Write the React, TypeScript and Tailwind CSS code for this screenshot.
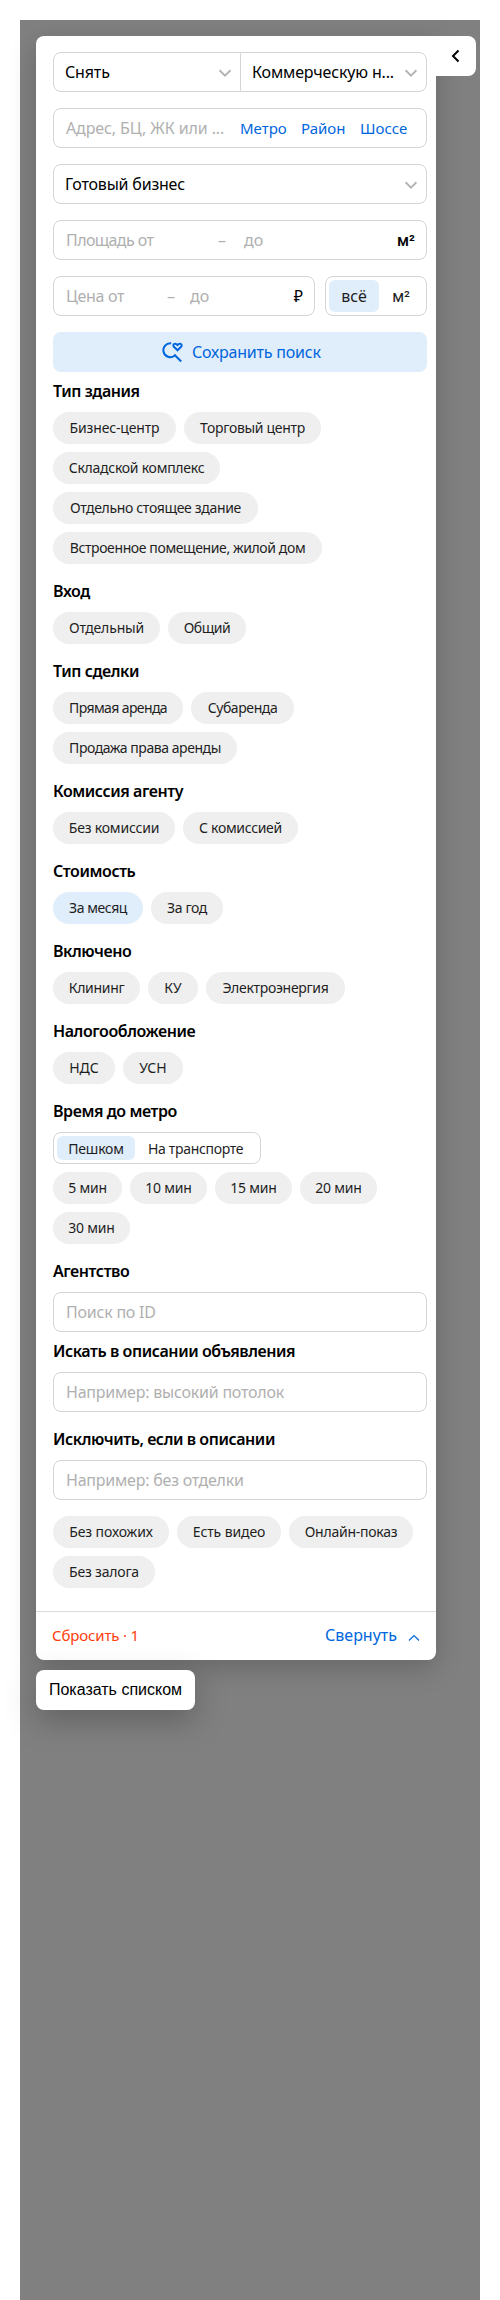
import React from 'react';

type ChipItem = { label: string; size: string; active?: boolean };

function Chip({ label, size, active }: ChipItem) {
  return (
    <button
      className={`flex h-8 shrink-0 items-center justify-center rounded-full text-[14px] leading-4 whitespace-nowrap text-[#1f1f1f] ${size} ${active ? 'bg-[#e0edfb]' : 'bg-[#efefef]'}`}
    >
      {label}
    </button>
  );
}

function Chips({ items }: { items: ChipItem[] }) {
  return (
    <div className="flex flex-wrap gap-2">
      {items.map((item) => (
        <Chip key={item.label} {...item} />
      ))}
    </div>
  );
}

function Heading({ title }: { title: string }) {
  return (
    <h3 className="flex h-10 items-center pb-[2px] text-[16px] font-semibold tracking-[-0.43px] whitespace-nowrap text-black">
      {title}
    </h3>
  );
}

function Section({ title, items }: { title: string; items: ChipItem[] }) {
  return (
    <section className="mb-2">
      <Heading title={title} />
      <Chips items={items} />
    </section>
  );
}

function Chevron() {
  return (
    <svg className="mt-px h-3 w-3 shrink-0" viewBox="0 0 12 12" fill="none" stroke="#b3b3b3" strokeWidth="2">
      <path d="M.5 3.200 6 8.700l5.500-5.500" />
    </svg>
  );
}

function SearchField({ placeholder }: { placeholder: string }) {
  return (
    <div className="flex h-10 items-center rounded-lg border border-[#d5d5d5] pl-3 text-[16px] tracking-[-0.22px] text-[#b0b0b0]">
      {placeholder}
    </div>
  );
}

const building: ChipItem[] = [
  { label: 'Бизнес-центр', size: 'w-[123px] tracking-[-0.15px]' },
  { label: 'Торговый центр', size: 'w-[137px] tracking-[-0.3px]' },
  { label: 'Складской комплекс', size: 'w-[167px] tracking-[-0.26px]' },
  { label: 'Отдельно стоящее здание', size: 'w-[205px] tracking-[-0.33px]' },
  { label: 'Встроенное помещение, жилой дом', size: 'w-[269px] tracking-[-0.39px]' },
];
const entrance: ChipItem[] = [
  { label: 'Отдельный', size: 'w-[107px] tracking-[-0.15px]' },
  { label: 'Общий', size: 'w-[78px] tracking-[-0.45px]' },
];
const deal: ChipItem[] = [
  { label: 'Прямая аренда', size: 'w-[130px] tracking-[-0.6px]' },
  { label: 'Субаренда', size: 'w-[103px] tracking-[-0.4px]' },
  { label: 'Продажа права аренды', size: 'w-[184px] tracking-[-0.44px]' },
];
const commission: ChipItem[] = [
  { label: 'Без комиссии', size: 'w-[122px] tracking-[-0.2px]' },
  { label: 'С комиссией', size: 'w-[115px] tracking-[-0.32px]' },
];
const cost: ChipItem[] = [
  { label: 'За месяц', size: 'w-[90px] tracking-[-0.45px]', active: true },
  { label: 'За год', size: 'w-[72px] tracking-[-0.4px]' },
];
const included: ChipItem[] = [
  { label: 'Клининг', size: 'w-[87px] tracking-[-0.3px]' },
  { label: 'КУ', size: 'w-[50px]' },
  { label: 'Электроэнергия', size: 'w-[139px] tracking-[-0.3px]' },
];
const tax: ChipItem[] = [
  { label: 'НДС', size: 'w-[62px]' },
  { label: 'УСН', size: 'w-[60px]' },
];
const minutes: ChipItem[] = [
  { label: '5 мин', size: 'w-[69px] tracking-[-0.2px]' },
  { label: '10 мин', size: 'w-[77px] tracking-[-0.2px]' },
  { label: '15 мин', size: 'w-[77px] tracking-[-0.2px]' },
  { label: '20 мин', size: 'w-[77px] tracking-[-0.2px]' },
  { label: '30 мин', size: 'w-[77px] tracking-[-0.2px]' },
];
const extra: ChipItem[] = [
  { label: 'Без похожих', size: 'w-[116px] tracking-[-0.1px]' },
  { label: 'Есть видео', size: 'w-[104px] tracking-[-0.1px]' },
  { label: 'Онлайн-показ', size: 'w-[124px] tracking-[-0.25px]' },
  { label: 'Без залога', size: 'w-[102px] tracking-[-0.2px]' },
];

export default function App() {
  return (
    <div className="h-[2300px] w-[500px] overflow-hidden bg-white pt-5 pl-5 font-['Noto_Sans',sans-serif]">
      <div className="h-[2280px] w-[460px] bg-[#808080] pt-4 pl-4">
        <div className="flex items-start">
          <main className="h-[1624px] w-[400px] rounded-lg rounded-tr-none bg-white shadow-[0_8px_28px_rgba(0,0,0,0.2)]">
            <div className="h-[1576px] border-b border-[#dcdcdc] pt-4 pr-[9px] pl-[17px]">
              <div className="flex h-10 rounded-lg border border-[#d5d5d5] text-[16px] tracking-[-0.15px] text-black">
                <div className="flex w-[187px] items-center justify-between border-r border-[#d5d5d5] pr-[9px] pl-[11px]">
                  Снять
                  <Chevron />
                </div>
                <div className="flex flex-1 items-center justify-between pr-[9px] pl-[11px] whitespace-nowrap">
                  Коммерческую н...
                  <Chevron />
                </div>
              </div>

              <div className="mt-4 flex h-10 items-center rounded-lg border border-[#d5d5d5] pl-3 whitespace-nowrap">
                <span className="w-[174px] text-[16px] tracking-[-0.1px] text-[#b0b0b0]">Адрес, БЦ, ЖК или ...</span>
                <span className="w-[61px] text-[15px] text-[#0066dd]">Метро</span>
                <span className="w-[59px] text-[15px] text-[#0066dd]">Район</span>
                <span className="text-[15px] text-[#0066dd]">Шоссе</span>
              </div>

              <div className="mt-4 flex h-10 items-center justify-between rounded-lg border border-[#d5d5d5] pr-[9px] pl-[11px] text-[16px] tracking-[-0.2px]">
                Готовый бизнес
                <Chevron />
              </div>

              <div className="mt-4 flex h-10 items-center rounded-lg border border-[#d5d5d5] pr-[11px] pl-3 text-[16px] text-[#b0b0b0]">
                <span className="w-[152px] tracking-[-0.6px]">Площадь от</span>
                <span className="w-[26px]">–</span>
                <span>до</span>
                <span className="ml-auto pt-0.5 font-['Roboto',sans-serif] text-[16px] font-medium text-black">м²</span>
              </div>

              <div className="mt-4 flex gap-[10px]">
                <div className="flex h-10 w-[262px] items-center rounded-lg border border-[#d5d5d5] pr-[11px] pl-3 text-[16px] text-[#b0b0b0]">
                  <span className="w-[101px] tracking-[-0.3px]">Цена от</span>
                  <span className="w-[23px]">–</span>
                  <span>до</span>
                  <span className="ml-auto text-black">₽</span>
                </div>
                <div className="flex h-10 w-[102px] items-center rounded-lg border border-[#d5d5d5] p-[3px] text-[16px] text-[#1f1f1f]">
                  <span className="flex h-8 w-[50px] items-center justify-center rounded-md bg-[#e0edfb]">всё</span>
                  <span className="flex h-8 w-[44px] items-center justify-center pt-px font-['Roboto',sans-serif] text-[16px]">м²</span>
                </div>
              </div>

              <button className="mt-4 flex h-10 w-full items-center rounded-lg bg-[#e0edfb] pl-[108px] text-[16px] tracking-[-0.2px] text-[#0066dd]">
                <svg className="mr-[9px] h-[22px] w-[22px]" viewBox="0 0 22 22" fill="none" stroke="#0066dd" strokeWidth="2">
                  <path d="M10.200 2.200A7 7 0 1 0 13.500 14.800M13.200 13.500l7 7" />
                  <path d="m16.500 9.300-3.600-3.500c-.9-1-.7-2.500.4-2.900 1.200-.5 2.200 0 3.200 1.100 1-1.100 2-1.600 3.200-1.100 1.100.4 1.300 1.900.4 2.900z" />
                </svg>
                Сохранить поиск
              </button>

              <Section title="Тип здания" items={building} />
              <Section title="Вход" items={entrance} />
              <Section title="Тип сделки" items={deal} />
              <Section title="Комиссия агенту" items={commission} />
              <Section title="Стоимость" items={cost} />
              <Section title="Включено" items={included} />
              <Section title="Налогообложение" items={tax} />

              <section className="mb-2">
                <Heading title="Время до метро" />
                <div className="mb-2 flex h-8 w-[208px] items-center rounded-lg border border-[#d5d5d5] p-[3px] text-[14px] text-[#1f1f1f]">
                  <span className="flex h-6 w-[78px] items-center justify-center rounded-md bg-[#e0edfb] tracking-[-0.2px]">Пешком</span>
                  <span className="flex h-6 flex-1 items-center pl-[13px] tracking-[-0.32px] whitespace-nowrap">На транспорте</span>
                </div>
                <Chips items={minutes} />
              </section>

              <Heading title="Агентство" />
              <SearchField placeholder="Поиск по ID" />
              <Heading title="Искать в описании объявления" />
              <SearchField placeholder="Например: высокий потолок" />
              <div className="h-2" />
              <Heading title="Исключить, если в описании" />
              <SearchField placeholder="Например: без отделки" />
              <div className="mt-4">
                <Chips items={extra} />
              </div>
            </div>
            <footer className="flex h-12 items-center pr-4 pb-[2px] pl-4">
              <span className="text-[15px] tracking-[-0.15px] text-[#ff3d0d]">Сбросить · 1</span>
              <span className="ml-auto text-[16px] text-[#0066dd]">Свернуть</span>
              <svg className="mt-[5px] ml-[11px] h-3 w-3" viewBox="0 0 12 12" fill="none" stroke="#0066dd" strokeWidth="1.2">
                <path d="M1 8.500l5-5 5 5" />
              </svg>
            </footer>
          </main>
          <button className="relative flex h-10 w-10 items-center justify-center rounded-r-lg bg-white">
            <svg className="h-4 w-4" viewBox="0 0 16 16" fill="none" stroke="#000" strokeWidth="2">
              <path d="M10.500 2.500 5 8l5.500 5.500" />
            </svg>
          </button>
        </div>
        <button className="relative mt-[10px] flex h-10 w-[159px] items-center justify-center rounded-lg bg-white font-['Liberation_Sans',sans-serif] text-[16px] text-black shadow-[0_10px_32px_rgba(0,0,0,0.25)]">
          Показать списком
        </button>
      </div>
    </div>
  );
}
